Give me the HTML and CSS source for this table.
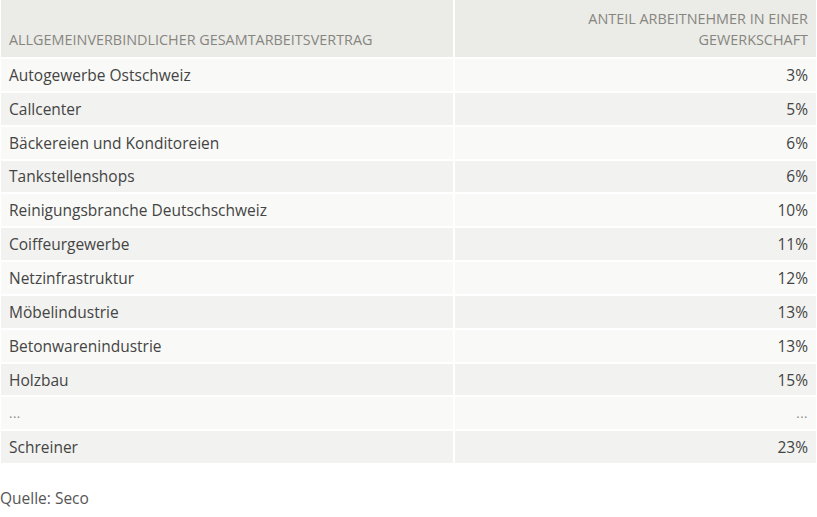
FILE: index.html
```html
<!DOCTYPE html>
<html lang="de">
<head>
<meta charset="utf-8">
<link rel="stylesheet" href="styles.css">
</head>
<body>
<div class="wrap">
<table class="data">
<thead>
<tr><th class="col-name">Allgemeinverbindlicher Gesamtarbeitsvertrag</th><th class="col-val"><span class="head-wrap">Anteil Arbeitnehmer in einer Gewerkschaft</span></th></tr>
</thead>
<tbody>
<tr><td>Autogewerbe Ostschweiz</td><td class="num">3%</td></tr>
<tr><td>Callcenter</td><td class="num">5%</td></tr>
<tr><td>Bäckereien und Konditoreien</td><td class="num">6%</td></tr>
<tr><td>Tankstellenshops</td><td class="num">6%</td></tr>
<tr><td>Reinigungsbranche Deutschschweiz</td><td class="num">10%</td></tr>
<tr><td>Coiffeurgewerbe</td><td class="num">11%</td></tr>
<tr><td>Netzinfrastruktur</td><td class="num">12%</td></tr>
<tr><td>Möbelindustrie</td><td class="num">13%</td></tr>
<tr><td>Betonwarenindustrie</td><td class="num">13%</td></tr>
<tr><td>Holzbau</td><td class="num">15%</td></tr>
<tr><td class="dots">...</td><td class="num dots">...</td></tr>
<tr><td>Schreiner</td><td class="num">23%</td></tr>
</tbody>
</table>
</div>
<p class="source">Quelle: Seco</p>
</body>
</html>
```
FILE: styles.css
```css
html, body {
  margin: 0;
  padding: 0;
  background: #ffffff;
}
body {
  font-family: "Open Sans", "Noto Sans", sans-serif;
  color: #444444;
}
.wrap {
  margin: -2px -1px 0 -1px;
}
.data {
  width: 100%;
  border-collapse: separate;
  border-spacing: 2px;
  font-size: 15.5px;
}
.data th {
  background: #ebebe7;
  color: #86867f;
  font-weight: 400;
  font-size: 14.4px;
  text-transform: uppercase;
  line-height: 21px;
  height: 57px;
  box-sizing: border-box;
  padding: 0 8px 7px 8px;
  vertical-align: bottom;
}
.data th.col-name {
  text-align: left;
  width: 55.6%;
}
.data th.col-val {
  text-align: right;
}
.head-wrap {
  display: inline-block;
  max-width: 240px;
}
.data td {
  height: 31.85px;
  box-sizing: border-box;
  padding: 0 8px;
  line-height: 20px;
  vertical-align: middle;
}
.data tbody tr:nth-child(odd) td {
  background: #f9f9f7;
}
.data tbody tr:nth-child(even) td {
  background: #f2f2f0;
}
.data td.num {
  text-align: right;
}
.data td.dots {
  color: #8a8a8a;
  font-size: 13px;
  letter-spacing: 0.5px;
}
.source {
  margin: 23px 0 0 0;
  font-size: 15.5px;
  line-height: 20px;
  color: #555;
}
```
